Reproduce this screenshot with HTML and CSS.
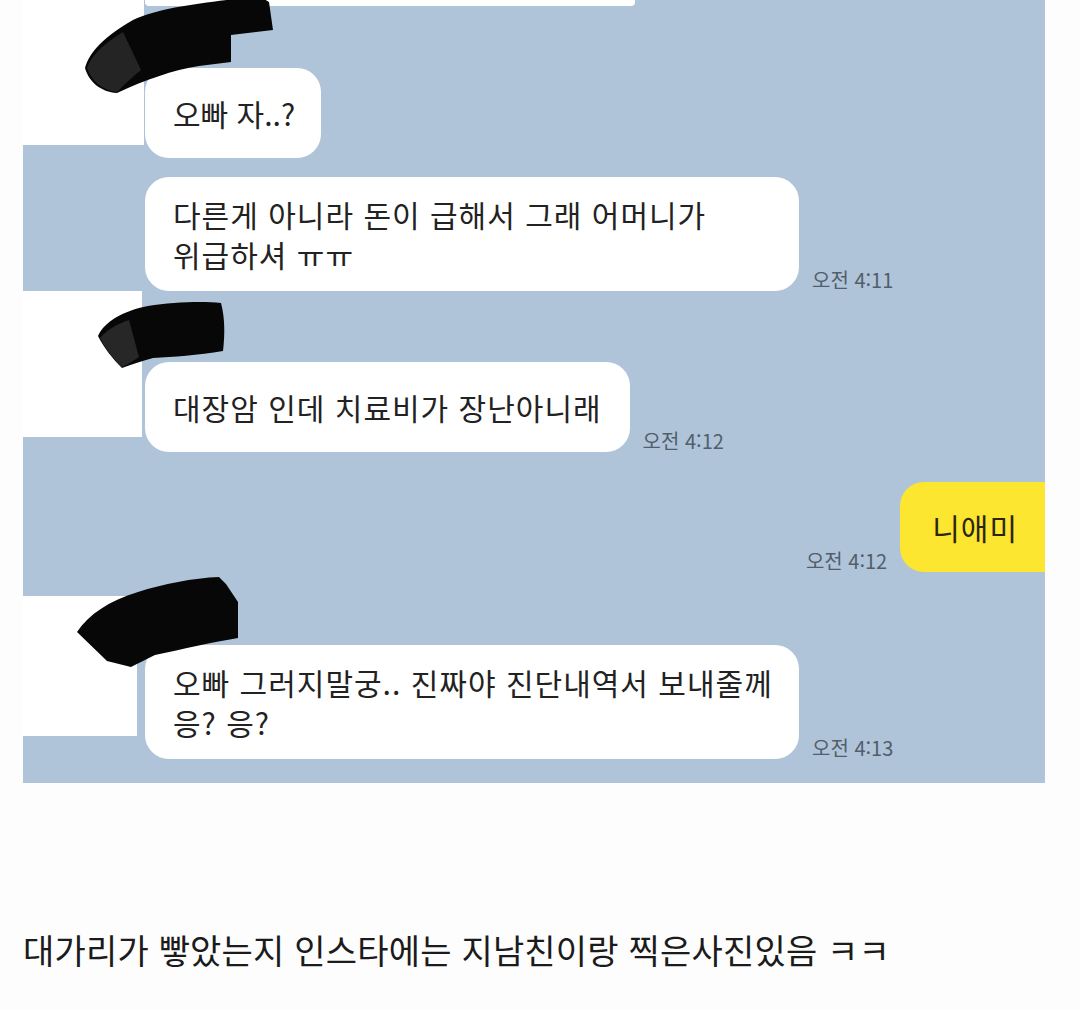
FILE: index.html
```html
<!DOCTYPE html>
<html lang="ko">
<head>
  <meta charset="UTF-8" />
  <meta name="viewport" content="width=device-width, initial-scale=1" />
  <title>카톡</title>
  <link rel="stylesheet" href="styles.css">
</head>
<body>
  <!-- Chat capture -->
  <div class="chat">
    <div class="group g1">
      <div class="avatar"></div>
      <div class="msgs">
        <div class="bubble cut"></div>
        <div class="row"><div class="bubble short">오빠 자..?</div></div>
        <div class="row">
          <div class="bubble multi">다른게 아니라 돈이 급해서 그래 어머니가<br>위급하셔 ㅠㅠ</div>
          <span class="time">오전 4:11</span>
        </div>
      </div>
    </div>

    <div class="group g2">
      <div class="avatar"></div>
      <div class="msgs">
        <div class="row">
          <div class="bubble">대장암 인데 치료비가 장난아니래</div>
          <span class="time">오전 4:12</span>
        </div>
      </div>
    </div>

    <div class="row sent">
      <span class="time">오전 4:12</span>
      <div class="bubble mine">니애미</div>
    </div>

    <div class="group g3">
      <div class="avatar"></div>
      <div class="msgs">
        <div class="row">
          <div class="bubble multi">오빠 그러지말궁.. 진짜야 진단내역서 보내줄께<br>응? 응?</div>
          <span class="time">오전 4:13</span>
        </div>
      </div>
    </div>

    <!-- redaction marks over the names -->
    <svg class="marks" viewBox="0 0 1022 783" aria-hidden="true">
      <path d="M62,68 C66,52 82,36 110,20 C140,6 190,2 236,-4 L246,2 L250,30 L208,35 L208,62 L176,66 C150,70 122,80 94,93 C78,92 66,82 62,68 Z" fill="#070707"/>
      <path d="M64,68 C68,56 80,44 100,32 L118,70 C108,78 100,86 94,92 C78,90 68,80 64,68 Z" fill="#242424"/>
      <path d="M75,336 C82,321 100,311 125,306 C150,302 180,301 198,303 C202,318 202,335 200,351 C175,355 150,357 130,358 C118,361 108,365 99,368 C90,359 81,348 75,336 Z" fill="#070707"/>
      <path d="M77,338 C84,330 94,324 106,320 L116,357 C110,361 104,365 99,367 C90,359 82,348 77,338 Z" fill="#272727"/>
      <path d="M54,632 C66,614 86,601 115,592 C140,584 170,578 196,577 L203,584 L215,602 L215,638 C190,642 160,649 132,655 C122,660 114,664 108,667 L84,661 Z" fill="#070707"/>
    </svg>
  </div>

  <p class="caption">대가리가 빻았는지 인스타에는 지남친이랑 찍은사진있음 ㅋㅋ</p>
</body>
</html>
```

FILE: styles.css
```css
html, body { margin: 0; padding: 0; }
body {
  background: #fdfdfd;
  font-family: "Noto Sans CJK KR", "Noto Sans", sans-serif;
  color: #222;
  width: 1080px;
  height: 1010px;
  overflow: hidden;
}
/* Chat capture */
.chat {
  position: relative;
  margin-left: 23px;
  width: 1022px;
  background: #afc4d9;
  overflow: hidden;
  padding-bottom: 24px;
}
.group { display: grid; grid-template-columns: 122px 1fr; align-items: start; }
.avatar { background: #fff; }
.g1 .avatar { width: 121px; height: 145px; }
.g2 .avatar { width: 119px; height: 146px; }
.g3 .avatar { width: 114px; height: 140px; }
.g3 { margin-top: 24px; }
.g2 .msgs { padding-top: 71px; }
.g3 .msgs { padding-top: 49px; }
.msgs { display: flex; flex-direction: column; align-items: flex-start; gap: 19px; }
.row { display: flex; align-items: flex-end; gap: 13px; }
.bubble {
  background: #fff;
  border-radius: 24px;
  padding: 25px 28px;
  box-sizing: border-box;
  font-size: 30px;
  line-height: 40px;
  letter-spacing: 1px;
  white-space: nowrap;
}
.bubble.short { letter-spacing: 0; padding-right: 26px; }
.bubble.multi { width: 654px; padding: 17px 28px; }
.bubble.cut {
  width: 490px;
  height: 6px;
  padding: 0;
  border-radius: 0 0 4px 4px;
  margin-bottom: 43px;
}
.time {
  font-size: 20px;
  line-height: 20px;
  color: #525e6b;
  margin-bottom: 1px;
  white-space: nowrap;
}
/* My message */
.sent { justify-content: flex-end; margin: 30px -29px 0 0; }
.bubble.mine {
  background: #fde62f;
  color: #2b2610;
  padding: 25px 56px 25px 32px;
}
.marks {
  position: absolute;
  left: 0; top: 0;
  width: 1022px; height: 783px;
  pointer-events: none;
}
/* Caption under the capture */
.caption {
  margin: 145px 23px 0;
  font-size: 34px;
  line-height: 44px;
  letter-spacing: 0.2px;
  color: #1b1b1b;
}
```
